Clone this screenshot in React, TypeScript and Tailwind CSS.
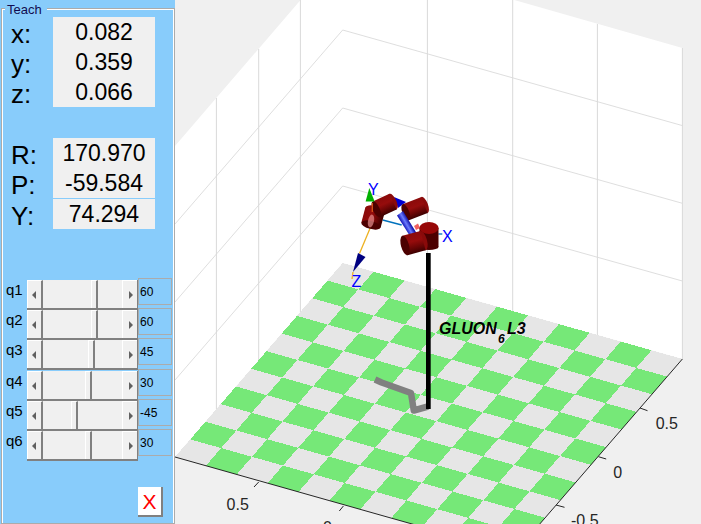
const positions = [
  { label: "x:", value: "0.082" },
  { label: "y:", value: "0.359" },
  { label: "z:", value: "0.066" },
];

const joints = [
  { name: "q1", value: "60", thumb: 48, extra: "" },
  { name: "q2", value: "60", thumb: 48, extra: "" },
  { name: "q3", value: "45", thumb: 45, extra: "" },
  { name: "q4", value: "30", thumb: 42, extra: "mt-[1px]" },
  { name: "q5", value: "-45", thumb: 28, extra: "" },
  { name: "q6", value: "30", thumb: 42, extra: "" },
];

// floor corners, measured off the plot
const back = { x: 342.7, y: 263 };
const stepA = { x: (682.4 - 342.7) / 11, y: (359 - 263) / 11 };
const stepB = { x: (175 - 342.7) / 11, y: (457 - 263) / 11 };

const pt = (i: number, j: number) =>
  `${back.x + i * stepA.x + j * stepB.x},${back.y + i * stepA.y + j * stepB.y}`;

const squares = Array.from({ length: 121 }, (_, n) => {
  const i = n % 11;
  const j = Math.floor(n / 11);
  return {
    key: n,
    points: [pt(i, j), pt(i + 1, j), pt(i + 1, j + 1), pt(i, j + 1)].join(" "),
    fill: (i + j) % 2 === 0 ? "#e6e6e6" : "#76e878",
  };
});

const wallLines = [
  [342.7, 30, 682.4, 125.6],
  [342.7, 108, 682.4, 203.3],
  [342.7, 186, 682.4, 281],
  [342.7, 30, 175, 224],
  [342.7, 108, 175, 302],
  [342.7, 186, 175, 380],
];

const verticals = [
  [216.4, 98, 409],
  [258.7, 49, 360],
  [300.4, 0, 312],
  [427.4, 0, 287],
  [512.7, 0, 311],
  [597.4, 24, 335],
  [682.4, 48, 359],
];

const ticks = [
  [258.7, 482, 254, 487],
  [343.4, 506, 339.3, 511],
  [640, 408, 647.5, 410.7],
  [598.4, 456.7, 606.2, 459],
  [556, 505, 564.5, 507.3],
];

const tickLabels = [
  { text: "0.5", x: 237.7, y: 509.5 },
  { text: "0", x: 327.5, y: 533 },
  { text: "0.5", x: 666.8, y: 429 },
  { text: "0", x: 617.7, y: 478 },
  { text: "-0.5", x: 584.8, y: 526 },
];

function Cylinder({ id, x1, y1, x2, y2, r }: { id: string; x1: number; y1: number; x2: number; y2: number; r: number }) {
  const dx = x2 - x1;
  const dy = y2 - y1;
  const len = Math.hypot(dx, dy);
  const nx = (-dy / len) * r;
  const ny = (dx / len) * r;
  const angle = (Math.atan2(dy, dx) * 180) / Math.PI;
  return (
    <g>
      <defs>
        <linearGradient id={id} gradientUnits="userSpaceOnUse" x1={x1 - nx} y1={y1 - ny} x2={x1 + nx} y2={y1 + ny}>
          <stop offset="0" stopColor="#8a0a0a" />
          <stop offset="0.4" stopColor="#960c0c" />
          <stop offset="0.72" stopColor="#6a0505" />
          <stop offset="1" stopColor="#3d0000" />
        </linearGradient>
      </defs>
      <ellipse cx={x2} cy={y2} rx={r * 0.4} ry={r} fill="#8a0a0a" transform={`rotate(${angle} ${x2} ${y2})`} />
      <polygon points={`${x1 + nx},${y1 + ny} ${x2 + nx},${y2 + ny} ${x2 - nx},${y2 - ny} ${x1 - nx},${y1 - ny}`} fill={`url(#${id})`} />
      <ellipse cx={x1} cy={y1} rx={r * 0.4} ry={r} fill="#4c0000" transform={`rotate(${angle} ${x1} ${y1})`} />
    </g>
  );
}

function Plot() {
  return (
    <svg className="block h-full w-full" viewBox="175 0 526 524" style={{ fontFamily: '"Liberation Sans", Arial, sans-serif' }}>
      <defs>
        <linearGradient id="link" gradientUnits="userSpaceOnUse" x1="403" y1="226" x2="410" y2="222">
          <stop offset="0" stopColor="#0a0ab0" />
          <stop offset="0.5" stopColor="#6c7cff" />
          <stop offset="1" stopColor="#0808a0" />
        </linearGradient>
      </defs>

      {/* walls */}
      <polygon points="175,146 342.7,-49 682.4,48 682.4,359 342.7,263 175,457" fill="#ffffff" />
      {wallLines.map((l, i) => (
        <line key={i} x1={l[0]} y1={l[1]} x2={l[2]} y2={l[3]} stroke="#d6d6d6" strokeWidth="0.8" />
      ))}
      {verticals.map((l, i) => (
        <line key={i} x1={l[0]} y1={l[1]} x2={l[0]} y2={l[2]} stroke="#d9d9d9" strokeWidth="1" />
      ))}

      {/* checkered floor */}
      {squares.map((s) => (
        <polygon key={s.key} points={s.points} fill={s.fill} shapeRendering="crispEdges" />
      ))}

      {/* axes */}
      <polyline points="175,457 514.7,553 682.4,359" fill="none" stroke="#262626" strokeWidth="1" />
      {ticks.map((t, i) => (
        <line key={i} x1={t[0]} y1={t[1]} x2={t[2]} y2={t[3]} stroke="#262626" strokeWidth="1" />
      ))}
      {tickLabels.map((t, i) => (
        <text key={i} x={t.x} y={t.y} textAnchor="middle" fontSize="16" fill="#262626">
          {t.text}
        </text>
      ))}

      {/* shadow and pedestal */}
      <polyline points="375,379.5 381.6,382.5 411,393 413.8,410.5 428,406.5" fill="none" stroke="#808080" strokeWidth="6.5" strokeLinejoin="round" />
      <rect x="426" y="253" width="4.7" height="156" fill="#000000" />

      {/* robot */}
      <line x1="382.7" y1="220" x2="401.7" y2="225" stroke="#0072bd" strokeWidth="1.3" />
      <line x1="438.3" y1="234" x2="442.3" y2="234" stroke="#0072bd" strokeWidth="1.3" />
      <line x1="370.7" y1="226.7" x2="359.5" y2="253.5" stroke="#edb120" strokeWidth="1.3" />
      <polygon points="358,253 365.5,257 353,272" fill="#000080" />
      <line x1="353" y1="272" x2="352" y2="279" stroke="#edb120" strokeWidth="1.3" />
      <polygon points="394,197 406,202 398,208" fill="#0000d0" />
      <Cylinder id="c5" x1={371} y1={225} x2={375} y2={210} r={10} />
      <ellipse cx="371" cy="221" rx="3" ry="6.5" fill="#e89090" opacity="0.7" transform="rotate(12 371 221)" />
      <Cylinder id="c4" x1={376.3} y1={209.3} x2={393} y2={201.7} r={8.6} />
      <Cylinder id="c3" x1={405.8} y1={212.2} x2={424.5} y2={205} r={8.6} />
      <polygon points="397,215.5 403,211 416.5,233 410.5,237" fill="url(#link)" />
      <polygon points="414,226 418,223.5 420,228 416,230" fill="#f06060" />
      <rect x="419.5" y="228" width="19" height="19" fill="#4c0000" />
      <ellipse cx="429" cy="247" rx="9.5" ry="3" fill="#4c0000" />
      <ellipse cx="429" cy="228" rx="9.6" ry="6" fill="#970707" />
      <Cylinder id="c2" x1={405} y1={245.5} x2={423} y2={240.7} r={10} />

      <polygon points="369.3,188 365.6,201.5 374.6,201.5" fill="#00b000" />
      <line x1="372.3" y1="203" x2="372.3" y2="212" stroke="#d95319" strokeWidth="1.3" />

      <text x="368" y="195" fontSize="16" fill="#0000ff">Y</text>
      <text x="442" y="241.5" fontSize="16" fill="#0000ff">X</text>
      <text x="351.5" y="286.5" fontSize="16" fill="#0000ff">Z</text>

      {/* robot name */}
      <text x="439" y="334" fontSize="16" fontWeight="700" fontStyle="italic" fill="#000000">GLUON</text>
      <text x="498" y="342.5" fontSize="12" fontWeight="700" fontStyle="italic" fill="#000000">6</text>
      <text x="507" y="334" fontSize="16" fontWeight="700" fontStyle="italic" fill="#000000">L3</text>
    </svg>
  );
}

function Slider({ thumb }: { thumb: number }) {
  return (
    <div className="flex h-[30px] w-[111px] border-b-2 border-r border-[#808080]">
      <div className="flex w-[16px] items-center justify-center border-l border-t border-r-2 border-l-white border-t-white border-r-[#808080] bg-[#f0f0f0] pr-[1px]">
        <span className="h-0 w-0 border-y-[4px] border-r-[4px] border-y-transparent border-r-[#606060]" />
      </div>
      <div className="flex flex-1 bg-[#f0f0f0]">
        <div style={{ width: thumb }} />
        <div className="w-[7px] border-l border-t border-r-2 border-l-white border-t-white border-r-[#808080]" />
      </div>
      <div className="flex w-[15px] items-center justify-center border-l border-t border-white bg-[#f0f0f0] pl-[2px]">
        <span className="h-0 w-0 border-y-[4px] border-l-[4px] border-y-transparent border-l-[#606060]" />
      </div>
    </div>
  );
}

export default function App() {
  return (
    <div className="flex h-[524px] w-[701px] overflow-hidden bg-[#f0f0f0] font-['Liberation_Sans',Arial,sans-serif] text-black">
      <aside className="h-full w-[175px] shrink-0 bg-[#88ccfb] pl-[1px] pt-[8px]">
        <div className="relative h-[516px] border border-[#ababab] shadow-[inset_1px_1px_0_#fff,inset_-1px_0_0_#fff]">
          <span className="absolute left-[3px] top-[-6px] bg-[#88ccfb] px-[2px] pr-[5px] text-[13px] leading-[13px] text-[#120c50]">Teach</span>

          <div className="pt-[8px]">
            {positions.map((p) => (
              <div key={p.label} className="flex h-[30px]">
                <div className="w-[51px] pl-[9px] pt-[2px] text-[26px] leading-[30px]">{p.label}</div>
                <div className="w-[102px] bg-[#f0f0f0] text-center text-[23px] leading-[30px]">{p.value}</div>
              </div>
            ))}
          </div>

          <div className="mt-[31px]">
            <div className="flex h-[30px]">
              <div className="w-[51px] pl-[9px] pt-[2px] text-[26px] leading-[30px]">R:</div>
              <div className="w-[102px] bg-[#f0f0f0] text-center text-[23px] leading-[30px]">170.970</div>
            </div>
            <div className="flex h-[30px]">
              <div className="w-[51px] pl-[9px] pt-[2px] text-[26px] leading-[30px]">P:</div>
              <div className="w-[102px] bg-[#f0f0f0] text-center text-[23px] leading-[30px]">-59.584</div>
            </div>
            <div className="mt-[1px] flex h-[30px]">
              <div className="w-[51px] pl-[9px] pt-[2px] text-[26px] leading-[30px]">Y:</div>
              <div className="w-[102px] bg-[#f0f0f0] text-center text-[23px] leading-[30px]">74.294</div>
            </div>
          </div>

          <div className="mt-[51px]">
            {joints.map((j) => (
              <div key={j.name} className={`flex h-[30px] ${j.extra}`}>
                <div className="w-[25px] pl-[4px] text-[15px] leading-[20px]">{j.name}</div>
                <Slider thumb={j.thumb} />
                <div className="-mt-[2px] flex h-[27px] w-[34px] items-center border border-[#ababab] pl-[1px] text-[12px]">{j.value}</div>
              </div>
            ))}
          </div>

          <button className="ml-[136px] mt-[26px] flex h-[30px] w-[25px] items-center justify-center border-b-2 border-r-2 border-[#808080] bg-white text-[21px] leading-none text-[#ff0000]">
            X
          </button>
        </div>
      </aside>

      <main className="min-w-0 flex-1">
        <Plot />
      </main>
    </div>
  );
}
